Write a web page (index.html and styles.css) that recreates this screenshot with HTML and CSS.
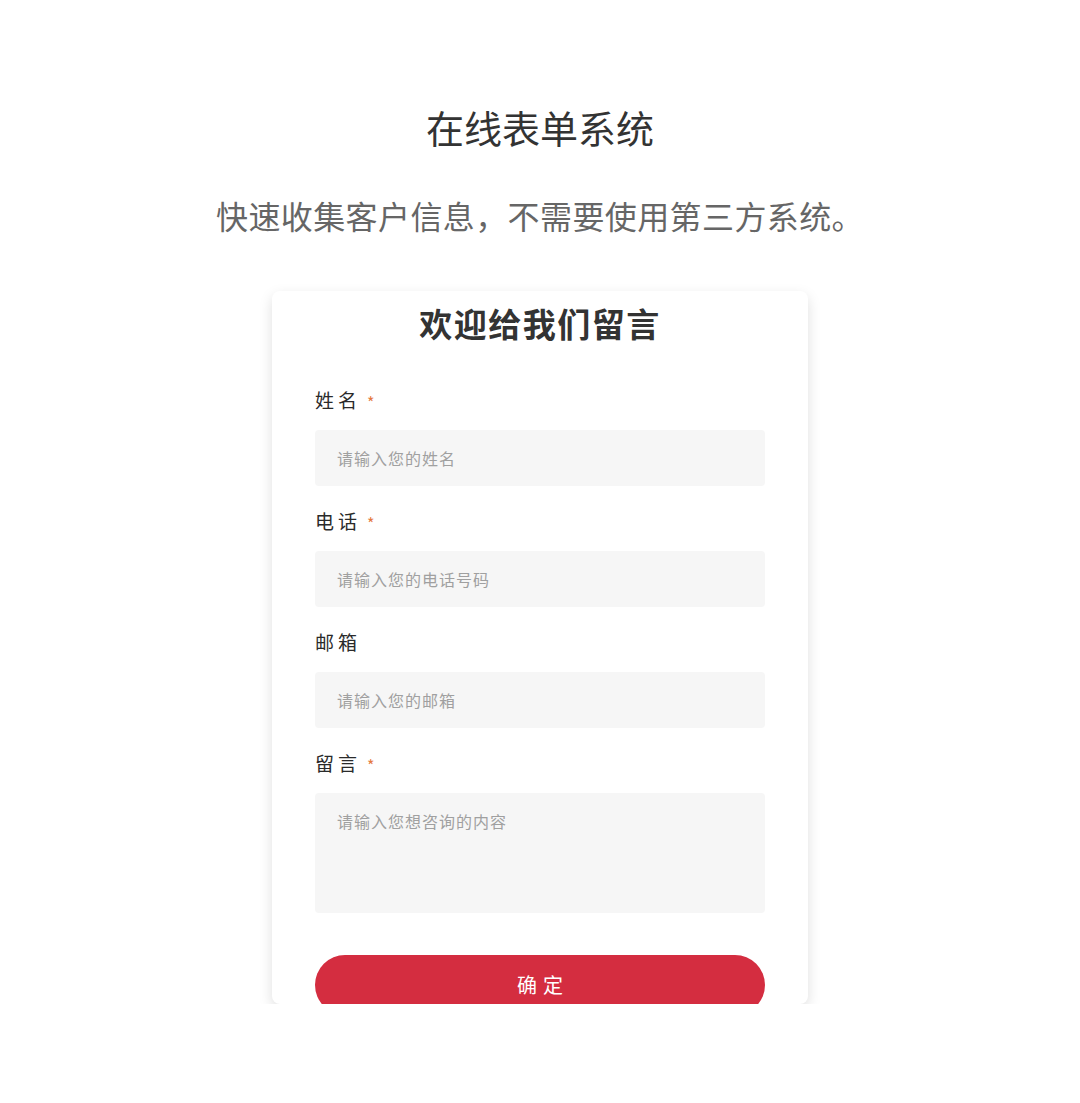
FILE: index.html
```html
<!DOCTYPE html>
<html lang="zh-CN">
<head>
<meta charset="utf-8">
<title>在线表单系统</title>
<link rel="stylesheet" href="styles.css">
</head>
<body>
<main class="page">
  <h1 class="page-title">在线表单系统</h1>
  <p class="page-sub">快速收集客户信息，不需要使用第三方系统。</p>
  <section class="card">
    <h2 class="card-title">欢迎给我们留言</h2>
    <form class="form">
      <div class="field">
        <label class="label">姓名<span class="req">*</span></label>
        <input class="input" type="text" placeholder="请输入您的姓名">
      </div>
      <div class="field">
        <label class="label">电话<span class="req">*</span></label>
        <input class="input" type="text" placeholder="请输入您的电话号码">
      </div>
      <div class="field">
        <label class="label">邮箱</label>
        <input class="input" type="text" placeholder="请输入您的邮箱">
      </div>
      <div class="field">
        <label class="label">留言<span class="req">*</span></label>
        <textarea class="input textarea" placeholder="请输入您想咨询的内容"></textarea>
      </div>
      <button class="submit" type="button">确定</button>
    </form>
  </section>
</main>
</body>
</html>
```

FILE: styles.css
```css
* { box-sizing: border-box; }
html, body { margin: 0; padding: 0; background: #ffffff; }
body {
  font-family: "Noto Sans CJK SC", "Noto Sans", sans-serif;
  color: #333;
}
.page {
  display: flex;
  flex-direction: column;
  align-items: center;
  padding-top: 105px;
}
.page-title {
  margin: 0;
  font-size: 38px;
  line-height: 44px;
  font-weight: 400;
  color: #333;
}
.page-sub {
  margin: 47px 0 0;
  font-size: 32px;
  line-height: 38px;
  font-weight: 400;
  color: #666;
  letter-spacing: 0.4px;
}
.card {
  margin-top: 57px;
  width: 536px;
  height: 713px;
  overflow: hidden;
  background: #fff;
  border-radius: 8px;
  box-shadow: 0 5px 14px rgba(0,0,0,0.13);
  padding: 15px 43px 0;
}
.card-title {
  margin: 0;
  text-align: center;
  font-size: 33px;
  line-height: 34px;
  font-weight: 700;
  color: #333;
  letter-spacing: 1.5px;
}
.form {
  display: flex;
  flex-direction: column;
  margin-top: 50px;
}
.field {
  display: flex;
  flex-direction: column;
  margin-bottom: 25px;
}
.field:last-of-type { margin-bottom: 0; }
.label {
  display: flex;
  align-items: flex-start;
  font-size: 19px;
  line-height: 20px;
  letter-spacing: 4px;
  color: #2a2a2a;
  margin-bottom: 20px;
}
.req {
  color: #e5793f;
  font-size: 16px;
  line-height: 16px;
  margin-left: 6px;
  margin-top: 4px;
}
.input {
  display: block;
  width: 100%;
  height: 56px;
  border: 0;
  border-radius: 4px;
  background: #f6f6f6;
  padding: 0 22px;
  font-family: inherit;
  font-size: 16px;
  letter-spacing: 1px;
  color: #333;
  outline: none;
}
.input::placeholder { color: #a0a0a0; }
.textarea {
  height: 120px;
  padding-top: 16px;
  resize: none;
  line-height: 24px;
}
.submit {
  margin-top: 42px;
  height: 60px;
  width: 100%;
  border: 0;
  border-radius: 30px;
  background: #d42d40;
  color: #fff;
  font-family: inherit;
  font-size: 20px;
  letter-spacing: 6px;
  padding: 0 0 2px 6px;
}
```
